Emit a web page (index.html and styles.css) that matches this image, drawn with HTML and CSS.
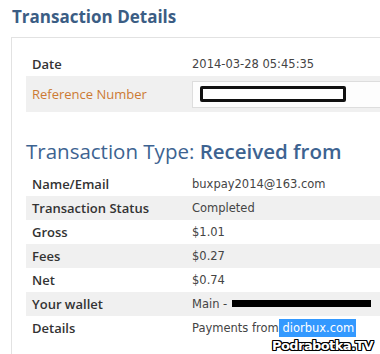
FILE: index.html
```html
<!DOCTYPE html>
<html>
<head>
<meta charset="utf-8">
<link rel="stylesheet" href="styles.css">
</head>
<body>
<h1 class="title">Transaction Details</h1>
<div class="panel">
  <div class="rows">
    <div class="row">
      <div class="label">Date</div>
      <div class="value">2014-03-28 05:45:35</div>
    </div>
    <div class="row row-alt row-ref">
      <div class="label label-ref">Reference Number</div>
      <div class="value value-input">
        <div class="ref-input"><span class="redact-box"></span></div>
      </div>
    </div>
  </div>
  <h2 class="section-title">Transaction Type: <strong>Received from</strong></h2>
  <div class="rows">
    <div class="row">
      <div class="label">Name/Email</div>
      <div class="value">buxpay2014@163.com</div>
    </div>
    <div class="row row-alt">
      <div class="label">Transaction Status</div>
      <div class="value">Completed</div>
    </div>
    <div class="row">
      <div class="label">Gross</div>
      <div class="value">$1.01</div>
    </div>
    <div class="row row-alt">
      <div class="label">Fees</div>
      <div class="value">$0.27</div>
    </div>
    <div class="row">
      <div class="label">Net</div>
      <div class="value">$0.74</div>
    </div>
    <div class="row row-alt">
      <div class="label">Your wallet</div>
      <div class="value">Main - <span class="redact-bar"></span></div>
    </div>
    <div class="row">
      <div class="label">Details</div>
      <div class="value">Payments from<span class="selected">&nbsp;diorbux.com</span></div>
    </div>
  </div>
</div>
<div class="watermark">Podrabotka.TV</div>
</body>
</html>
```
FILE: styles.css
```css
html, body {
  margin: 0;
  padding: 0;
  background: #ffffff;
  overflow: hidden;
}
body {
  position: relative;
  width: 380px;
  height: 354px;
  font-family: "Open Sans", "DejaVu Sans", sans-serif;
}
.title {
  margin: 0;
  padding: 5px 0 0 12px;
  height: 37px;
  box-sizing: border-box;
  font-size: 17px;
  line-height: 24px;
  font-weight: 700;
  color: #3b5d84;
}
.panel {
  margin-left: 11px;
  height: 317px;
  border-top: 1px solid #e2e2e2;
  border-left: 1px solid #e2e2e2;
  padding: 14px 0 0 14px;
  box-sizing: border-box;
}
.rows {
  display: flex;
  flex-direction: column;
}
.row {
  display: grid;
  grid-template-columns: 166px 1fr;
  align-items: center;
  height: 24px;
}
.row-alt {
  background: #f0f0f0;
}
.row-ref {
  height: 36px;
}
.label {
  padding-left: 6px;
  font-size: 13px;
  font-weight: 600;
  color: #333333;
}
.label-ref {
  color: #cc7a33;
  font-weight: 500;
}
.value {
  font-family: "DejaVu Sans", sans-serif;
  font-size: 11.5px;
  line-height: 18px;
  color: #444444;
  white-space: nowrap;
}
.value-input {
  display: flex;
}
.ref-input {
  flex: 1;
  height: 27px;
  border: 1px solid #dddddd;
  border-right: none;
  background: #fdfdfd;
  box-sizing: border-box;
  display: flex;
  align-items: center;
  padding-left: 7px;
}
.redact-box {
  width: 146px;
  height: 16px;
  border: 3px solid #111111;
  border-radius: 2px;
  background: #ffffff;
  box-sizing: border-box;
}
.redact-bar {
  display: inline-block;
  width: 139px;
  height: 7px;
  background: #000000;
  margin-left: 1px;
  vertical-align: 1px;
}
.section-title {
  margin: 0;
  padding: 24px 0 0 0;
  height: 60px;
  box-sizing: border-box;
  font-size: 20.5px;
  line-height: 30px;
  font-weight: 400;
  color: #3d6391;
}
.section-title strong {
  font-weight: 600;
}
.selected {
  display: inline-block;
  background: #3399ff;
  color: #ffffff;
  line-height: 18px;
  padding-right: 2px;
}
.watermark {
  position: absolute;
  right: 7px;
  bottom: 1px;
  font-family: "DejaVu Sans", sans-serif;
  font-weight: 700;
  font-size: 13px;
  letter-spacing: -0.6px;
  color: #ffffff;
  text-shadow: 1px 0 0 #000, -1px 0 0 #000, 0 1px 0 #000, 0 -1px 0 #000, 1px 1px 0 #000, -1px -1px 0 #000, 1px -1px 0 #000, -1px 1px 0 #000;
}
```
